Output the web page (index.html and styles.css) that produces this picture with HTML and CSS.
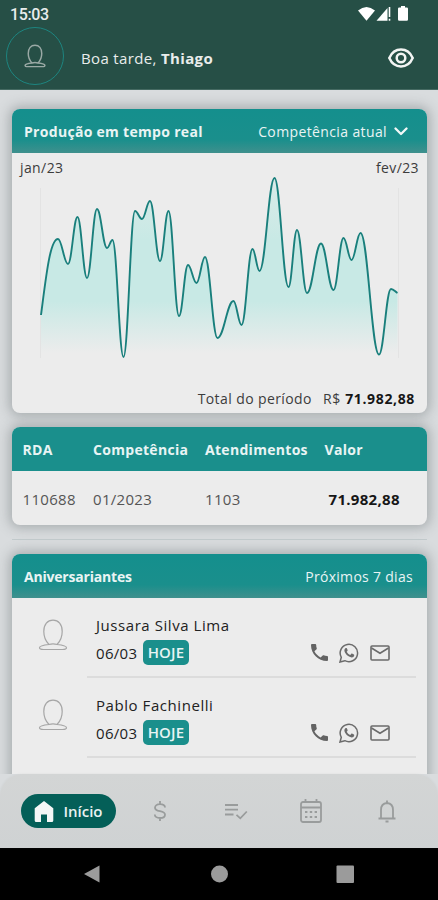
FILE: index.html
```html
<!DOCTYPE html>
<html lang="pt-BR">
<head>
<meta charset="utf-8">
<meta name="viewport" content="width=device-width, initial-scale=1">
<title>Início</title>
<link rel="stylesheet" href="styles.css">
</head>
<body>
<svg class="defs" aria-hidden="true">
  <symbol id="person" viewBox="0 0 30 32"><path d="M11 25.500C7.500 22 5.800 17 5.800 12.500 5.800 5.500 9.500 1.200 15 1.200s9.200 4.300 9.200 11.300c0 4.500-1.700 9.500-5.200 13M11 25.500c-5 .5-9.500 1.600-9.500 3.300 0 1.300 2 1.700 4 1.700h19c2 0 4-.4 4-1.700 0-1.700-4.500-2.800-9.500-3.300-2.500-.8-5.500-.8-8 0z"/></symbol>
  <symbol id="phone" viewBox="0 0 18 18"><path d="M0 1c0-.6.4-1 1-1h3.500c.6 0 1 .4 1 1 0 1.300.2 2.500.6 3.600.1.400 0 .8-.2 1L3.600 7.800c1.500 2.800 3.800 5.200 6.600 6.600l2.200-2.200c.3-.3.700-.4 1-.2 1.100.4 2.300.6 3.600.6.600 0 1 .4 1 1V17c0 .6-.4 1-1 1C7.600 18 0 10.400 0 1z"/></symbol>
  <symbol id="whats" viewBox="0 0 20 20"><path class="line" d="M1 19l1.300-4.700A8.700 8.700 0 1 1 5.800 17.700z"/><path class="solid" d="M6.700 5c.4-.2.900-.1 1.100.2l.8 1.900c.1.300 0 .5-.2.800l-.7.800c.8 1.500 1.900 2.500 3.600 3.300l1-1.200c.2-.2.400-.3.700-.2l1.900.9c.4.200.4.500.3 1-.2 1.200-1.400 2-2.500 1.900-3.700-.4-7.100-3.800-7.300-6.800 0-1.100.5-2.100 1.300-2.600z"/></symbol>
  <symbol id="mail" viewBox="0 0 20 16"><rect x="1" y="1" width="18" height="14" rx="1"/><path d="M1.500 3 10 8.300 18.500 3"/></symbol>
</svg>
<div class="app">
  <header class="top">
    <div class="status">
      <span class="clock">15:03</span>
      <svg class="signals" width="50" height="16" viewBox="0 0 50 16"><path d="M0 4.500Q8.500-2.500 17 4.500L8.500 14.800z"/><path d="M18.500 14.800 29.500 2v12.800z"/><path d="M30.700 1h1.600v10h-1.600zM30.700 12.800h1.600v2h-1.600z"/><path d="M43 0h4v1.600h1.800q1.200 0 1.200 1.200v10.800q0 1.200-1.200 1.200h-7.600q-1.200 0-1.200-1.200V2.800q0-1.200 1.200-1.200H43z"/></svg>
    </div>
    <div class="greeting">
      <span class="avatar"><svg width="22" height="24"><use href="#person"/></svg></span>
      <p class="hello">Boa tarde, <b>Thiago</b></p>
      <svg class="eye" width="26" height="20" viewBox="0 0 26 20"><path d="M1.300 10Q5 1.600 13 1.600T24.700 10Q21 18.400 13 18.400T1.300 10z"/><circle cx="13" cy="10" r="4.300"/></svg>
    </div>
  </header>

  <main class="content">
    <section class="card production">
      <div class="card-head">
        <h2 class="title-prod">Produção em tempo real</h2>
        <span class="period">Competência atual <svg width="14" height="9" viewBox="0 0 14 9"><path d="M1.500 1.500 7 7l5.500-5.500"/></svg></span>
      </div>
      <div class="range"><span>jan/23</span><span>fev/23</span></div>
      <svg class="chart" width="415" height="209" viewBox="12 175 415 209">
        <defs><linearGradient id="fill" gradientUnits="userSpaceOnUse" x1="0" y1="180" x2="0" y2="353"><stop offset="0" stop-color="#c8e9e5" stop-opacity=".5"/><stop offset=".35" stop-color="#c8e9e5"/><stop offset=".7" stop-color="#c8e9e5"/><stop offset="1" stop-color="#ececec"/></linearGradient></defs>
        <path class="axis" d="M40.500 188v170M398.500 188v170"/>
        <path id="area" fill="url(#fill)"/>
        <path id="line"/>
      </svg>
      <p class="total"><span class="total-label">Total do período</span><span class="total-value">R$ <b>71.982,88</b></span></p>
    </section>

    <section class="card summary">
      <div class="cols card-head"><b>RDA</b><b>Competência</b><b>Atendimentos</b><b>Valor</b></div>
      <div class="cols values"><span>110688</span><span>01/2023</span><span>1103</span><b>71.982,88</b></div>
    </section>

    <hr class="divider">

    <section class="card birthdays">
      <div class="card-head"><h2 class="title-birth">Aniversariantes</h2><span class="next">Próximos 7 dias</span></div>
      <article class="person">
        <svg class="face" width="30" height="32"><use href="#person"/></svg>
        <div class="info">
          <h3>Jussara Silva Lima</h3>
          <div class="row"><span class="date">06/03</span><span class="badge">HOJE</span>
            <span class="actions"><svg class="phone" width="17" height="17"><use href="#phone"/></svg><svg class="whats" width="20" height="20"><use href="#whats"/></svg><svg class="mail" width="20" height="16"><use href="#mail"/></svg></span>
          </div>
        </div>
      </article>
      <article class="person">
        <svg class="face" width="30" height="32"><use href="#person"/></svg>
        <div class="info">
          <h3>Pablo Fachinelli</h3>
          <div class="row"><span class="date">06/03</span><span class="badge">HOJE</span>
            <span class="actions"><svg class="phone" width="17" height="17"><use href="#phone"/></svg><svg class="whats" width="20" height="20"><use href="#whats"/></svg><svg class="mail" width="20" height="16"><use href="#mail"/></svg></span>
          </div>
        </div>
      </article>
    </section>
  </main>

  <nav class="tabs">
    <a class="home"><svg width="20" height="21" viewBox="0 0 20 21"><path d="M10 0 19.300 7.300V19.500Q19.300 21 17.800 21H13V13.500H7V21H2.200Q.7 21 .7 19.500V7.300z"/></svg><span>Início</span></a>
    <a class="tab"><svg width="14" height="22" viewBox="0 0 14 22"><path d="M7 1v3.200M7 18v3M12 7.500C12 5.500 10 4.200 7 4.200S2 5.500 2 7.700c0 5 10 2 10 7 0 2.100-2 3.300-5 3.300s-5.200-1.300-5.200-3.600"/></svg></a>
    <a class="tab"><svg width="24" height="17" viewBox="0 0 24 17"><path d="M1 2h13M1 6.700h13M1 11.500h8.500M12.500 11.800l3.800 3.500 6.500-6.800"/></svg></a>
    <a class="tab"><svg width="22" height="24" viewBox="0 0 22 24"><rect x="1" y="3" width="20" height="20" rx="2"/><path d="M1 8.500h20M5.500 0v3M16.500 0v3"/><path class="dots" d="M5 13h12M5 18h12"/></svg></a>
    <a class="tab"><svg width="18" height="23" viewBox="0 0 18 23"><path d="M.5 18.500h17M3 18.500V10q0-6.500 6-7 6 .5 6 7v8.500M9 .5V3M7.500 21.500h3"/></svg></a>
  </nav>
  <footer class="system"><svg width="438" height="52" viewBox="0 0 438 52"><path d="M84 26 99.500 17.500V34.500z"/><circle cx="219.500" cy="26" r="8.500"/><rect x="336.500" y="17.500" width="17.500" height="17.500" rx="1"/></svg></footer>
</div>
<script src="chart.js"></script>
</body>
</html>
```
FILE: styles.css
```css
* { box-sizing: border-box; }
body { margin: 0; width: 438px; height: 900px; overflow: hidden; font-family: "Open Sans", "Noto Sans", sans-serif; font-size: 14px; color: #3c3c3c; }
h2, h3, p { margin: 0; font-weight: 400; font-size: inherit; }
svg { display: block; flex: none; fill: none; }
.defs { position: absolute; width: 0; height: 0; }
.app { height: 900px; display: flex; flex-direction: column; background: #d9dcde; }

.top { flex: none; height: 90px; background: #264f46; border-bottom: 1px solid #456a62; color: #e9edec; }
.status { display: flex; justify-content: space-between; height: 27px; padding: 6px 30px 0 10px; }
.clock { font: 500 16px/17px Roboto, sans-serif; letter-spacing: -.4px; }
.signals { fill: #fff; }
.greeting { display: flex; align-items: center; height: 57px; padding: 0 24px 0 6px; }
.avatar { display: grid; place-items: center; width: 58px; height: 58px; border: 1.500px solid #1d8580; border-radius: 50%; }
.avatar svg { stroke: #9aa9a5; stroke-width: 2; }
.hello { margin: 5px auto 0 17px; font-size: 15px; font-weight: 500; letter-spacing: .35px; }
.eye { margin-top: 5px; stroke: #f2f4f3; stroke-width: 2.500; }

.content { flex: 1; min-height: 0; overflow: hidden; padding: 19px 11px 0 12px; }
.card { border-radius: 8px; background: #ececec; box-shadow: 0 0 12px 3px rgba(90, 96, 100, .38); }
.card-head { height: 44px; border-radius: 8px 8px 0 0; background: #1a8f8c; color: #e9f4f4; display: flex; align-items: center; justify-content: space-between; padding: 1px 14px 0 12px; letter-spacing: .3px; }
.production .card-head, .birthdays .card-head { background: linear-gradient(#148f8d 0, #1a8f8c 70%, #3f908d 100%); }
.card-head h2 { font-weight: 700; }
.production { height: 304px; display: flex; flex-direction: column; }
.production .card-head { padding-right: 19px; }
.period { display: flex; align-items: center; gap: 7px; font-weight: 500; letter-spacing: .38px; }
.period svg { stroke: #f2f8f8; stroke-width: 2.300; stroke-linecap: round; stroke-linejoin: round; }
.range { display: flex; justify-content: space-between; height: 22px; padding: 5px 8px 0; line-height: 20px; letter-spacing: .4px; }
.chart .axis { stroke: #e3e3e3; }
#line { stroke: #197f7c; stroke-width: 1.900; stroke-linejoin: round; }
.total { display: flex; justify-content: flex-end; align-items: baseline; gap: 11px; padding: 5px 12px 0 0; line-height: 20px; letter-spacing: .4px; }
.total-value { letter-spacing: .65px; }
.total b, .values b { color: #161616; }

.summary { height: 98px; margin-top: 14px; }
.cols { display: grid; grid-template-columns: 70.500px 112px 119.500px 1fr; align-items: center; padding: 1px 0 0 10.500px; }
.values { height: 54px; font-size: 15px; letter-spacing: .3px; }
.values span { color: #555; }
.values b { padding-left: 4px; }
.divider { height: 1px; margin: 14px 0; border: 0; background: #c2cacc; }

.birthdays { height: 260px; }
.card-head .title-birth { letter-spacing: -.2px; }
.next { font-weight: 500; }
.person { display: flex; height: 80px; padding-right: 11px; }
.face { margin: 21px 19px 0 26px; stroke: #a6a6a6; stroke-width: 1.200; }
.info { flex: 1; padding: 17px 0 0 9px; border-bottom: 2px solid #dcdcdc; color: #222; }
.info h3 { font-size: 15px; line-height: 20px; letter-spacing: .56px; }
.row { display: flex; align-items: center; height: 25px; margin-top: 5px; }
.date { width: 47px; font-size: 15px; letter-spacing: .3px; }
.badge { width: 46px; height: 25px; border-radius: 5px; background: #1a8f8c; color: #e9f4f4; text-align: center; font-size: 15px; line-height: 25px; font-weight: 600; letter-spacing: .2px; }
.actions { display: flex; align-items: center; gap: 11px; margin-left: auto; padding-right: 26px; }
.phone { fill: #636363; }
.line { stroke: #6b6b6b; stroke-width: 1.500; }
.solid { fill: #6b6b6b; }
.mail { stroke: #6b6b6b; stroke-width: 1.600; }

.tabs { flex: none; height: 74px; display: flex; align-items: center; padding: 0 0 0 21px; border-radius: 22px 22px 0 0; background: linear-gradient(#d3d5d5, #cfd2d3); box-shadow: 0 0 2px rgba(110, 120, 120, .12); position: relative; }
.home { display: flex; align-items: center; justify-content: center; gap: 9px; width: 95px; height: 34px; margin-right: 6px; border-radius: 17px; background: #045f58; color: #e9f2f1; font-size: 15px; font-weight: 600; }
.home svg { fill: #f4f7f6; }
.tab { display: grid; place-items: center; width: 75.700px; }
.tab svg { stroke: #999c9c; stroke-width: 1.800; }
.tab .dots { stroke-width: 2.200; stroke-dasharray: 2.400; }
.system { flex: none; height: 52px; background: #000; }
.system svg { fill: #9b9b9b; }
```
FILE: chart.js
```js
// Turning points of the production curve
const points = [[41,315],[58,239],[68,264],[77.5,217],[87,278],[97,209],[107,248],[112.5,240],[123.5,357],[135,211],[142,219],[150,201],[160,261],[168.5,211],[179,316],[188,265],[196.5,283],[205,257],[217.5,338],[233.5,301],[241.5,325],[252.5,249],[259.5,271],[274.5,178],[288.5,287],[297,230],[307,293],[321,243.5],[333.5,290],[343.5,238],[351.5,260],[360.5,233],[379,354.5],[391,289],[397.5,293]];
let d = `M${points[0]}`;
for (let i = 1; i < points.length; i++) {
  const [x0, y0] = points[i - 1];
  const [x1, y1] = points[i];
  const k = (x1 - x0) * 0.4;
  if (i === 1) d += `C${x0 + 5},${y0 - 38} ${x1 - 8},${y1} ${x1},${y1}`;
  else if (i === points.length - 1) d += `C${x0 + 2.5},${y0} ${x1 - 2},${y1 - 1} ${x1},${y1}`;
  else d += `C${x0 + k},${y0} ${x1 - k},${y1} ${x1},${y1}`;
}
document.getElementById('line').setAttribute('d', d);
document.getElementById('area').setAttribute('d', `${d}V357H41Z`);
```
